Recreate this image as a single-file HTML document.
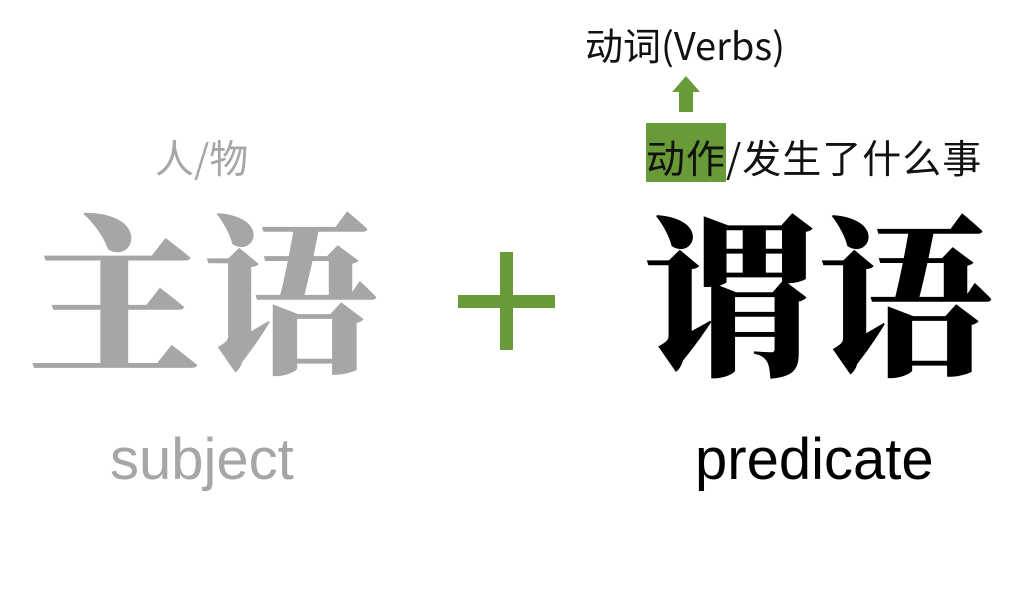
<!DOCTYPE html>
<html><head><meta charset="utf-8"><style>
html,body{margin:0;padding:0;background:#fff;width:1026px;height:590px;overflow:hidden;position:relative}
.t{position:absolute;white-space:nowrap;font-family:"Noto Sans CJK SC","Liberation Sans",sans-serif;line-height:1}
.l{position:absolute;white-space:nowrap;font-family:"Liberation Sans",sans-serif;line-height:1}
.big{position:absolute;white-space:nowrap;font-family:"Noto Serif CJK SC",serif;font-weight:900;font-size:174px;line-height:1;letter-spacing:1px}
</style></head><body>
<div class="t" style="left:585px;top:25px;font-size:38px;color:#111;font-weight:400">动词(Verbs)</div>
<div style="position:absolute;left:679px;top:90px;width:14px;height:22px;background:#689a37"></div>
<div style="position:absolute;left:672px;top:76px;width:0;height:0;border-left:14px solid transparent;border-right:14px solid transparent;border-bottom:16px solid #689a37"></div>
<div style="position:absolute;left:646px;top:123px;width:80px;height:59px;background:#689a37"></div>
<div class="t" style="left:646px;top:138px;font-size:39px;color:#111;font-weight:400;letter-spacing:1px">动作/发生了什么事</div>
<div class="t" style="left:155px;top:138px;font-size:39px;color:#a6a6a6;font-weight:400">人/物</div>
<div class="big" style="left:28px;top:198px;color:#a6a6a6">主语</div>
<div class="big" style="left:643px;top:200px;color:#000">谓语</div>
<div style="position:absolute;left:458px;top:295px;width:97px;height:13px;background:#689a37"></div>
<div style="position:absolute;left:500px;top:252px;width:13px;height:98px;background:#689a37"></div>
<div class="l" style="left:110px;top:431px;font-size:58px;color:#a6a6a6">subject</div>
<div class="l" style="left:695px;top:431px;font-size:58px;color:#000">predicate</div>
</body></html>
